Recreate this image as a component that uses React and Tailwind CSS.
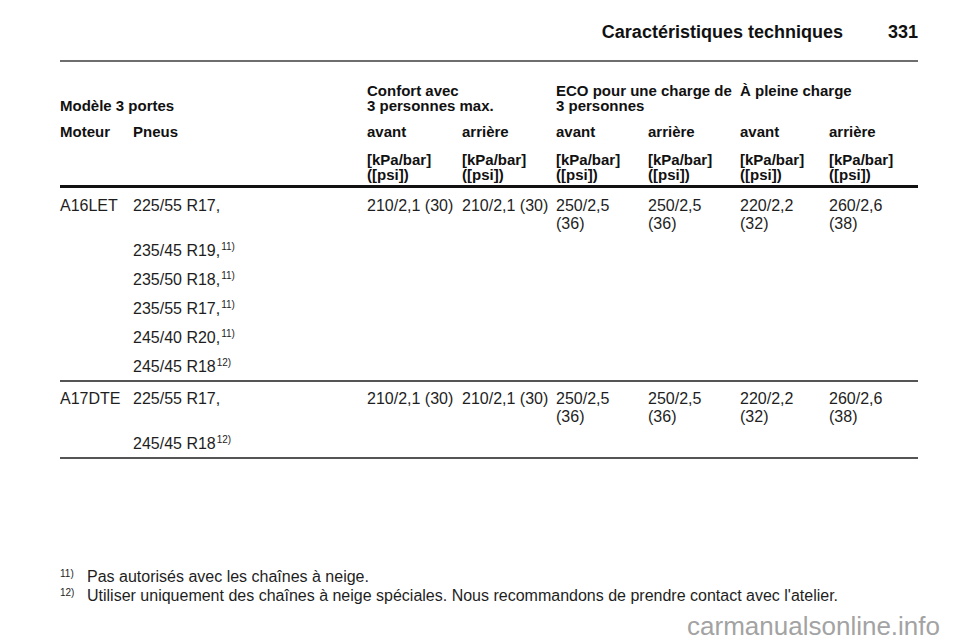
import React from 'react';

const cols = 'grid grid-cols-[73px_234px_95px_94px_92px_92px_89px_89px]';

function Sup({ n }) {
  return <sup className="text-[10px] relative top-[-6px] ml-[1px]">{n}</sup>;
}

function Values() {
  const vals = [
    ['210/2,1 (30)'],
    ['210/2,1 (30)'],
    ['250/2,5', '(36)'],
    ['250/2,5', '(36)'],
    ['220/2,2', '(32)'],
    ['260/2,6', '(38)'],
  ];
  return vals.map((v, i) => (
    <div key={i} className="whitespace-nowrap">
      {v.map((line, j) => (
        <div key={j}>{line}</div>
      ))}
    </div>
  ));
}

function Group({ engine, tires, first }) {
  return (
    <div className="border-b-[2px] border-[#555] pb-[4px]">
      <div className={`${cols} ${first ? 'pt-[9px]' : 'pt-[8px]'}`}>
        <div>{engine}</div>
        <div>225/55 R17,</div>
        <Values />
      </div>
      {tires.map((t, i) => (
        <div key={i} className={`${cols} ${i === 0 ? 'pt-[9px]' : 'pt-[11px]'}`}>
          <div />
          <div className="whitespace-nowrap">
            {t.name}
            <Sup n={t.note} />
          </div>
        </div>
      ))}
    </div>
  );
}

export default function App() {
  const g1 = [
    { name: '235/45 R19,', note: '11)' },
    { name: '235/50 R18,', note: '11)' },
    { name: '235/55 R17,', note: '11)' },
    { name: '245/40 R20,', note: '11)' },
    { name: '245/45 R18', note: '12)' },
  ];
  const g2 = [{ name: '245/45 R18', note: '12)' }];

  return (
    <div className="w-[960px] h-[642px] overflow-hidden bg-white text-[#1e1e1e] font-['Liberation_Sans',Arial,sans-serif]">
      <div className="pl-[60px] pr-[42px]">
        <div className="pt-[21px] flex justify-end items-baseline text-[18px] leading-[22px] font-bold text-[#111]">
          <span>Caractéristiques techniques</span>
          <span className="ml-[45px]">331</span>
        </div>
        <div className="mt-[17px] h-[2px] bg-[#6e6e6e]" />

        <div className="text-[15px] leading-[15px] font-bold text-[#111]">
          <div className={`${cols} pt-[21px]`}>
            <div className="col-span-2 self-end">Modèle 3 portes</div>
            <div className="col-span-2">
              Confort avec
              <br />3 personnes max.
            </div>
            <div className="col-span-2 whitespace-nowrap">
              ECO pour une charge de
              <br />3 personnes
            </div>
            <div className="col-span-2 whitespace-nowrap">À pleine charge</div>
          </div>
          <div className={`${cols} pt-[11px]`}>
            <div>Moteur</div>
            <div>Pneus</div>
            <div>avant</div>
            <div>arrière</div>
            <div>avant</div>
            <div>arrière</div>
            <div>avant</div>
            <div>arrière</div>
          </div>
          <div className={`${cols} pt-[13px] pb-[3px] border-b-[3px] border-[#111]`}>
            <div />
            <div />
            {[0, 1, 2, 3, 4, 5].map((i) => (
              <div key={i}>
                [kPa/bar]
                <br />([psi])
              </div>
            ))}
          </div>
        </div>

        <div className="text-[16px] leading-[18px]">
          <Group engine="A16LET" tires={g1} first />
          <Group engine="A17DTE" tires={g2} />
        </div>

        <div className="mt-[108px] text-[16px] leading-[19px]">
          <div className="flex">
            <span className="w-[27px] text-[10px] leading-[14px] shrink-0">11)</span>
            <span>Pas autorisés avec les chaînes à neige.</span>
          </div>
          <div className="flex">
            <span className="w-[27px] text-[10px] leading-[14px] shrink-0">12)</span>
            <span>Utiliser uniquement des chaînes à neige spéciales. Nous recommandons de prendre contact avec l'atelier.</span>
          </div>
        </div>
      </div>
      <div className="flex justify-end pr-[20px] mt-[6px] text-[26px] leading-[30px] text-[#a3a3a3]">
        carmanualsonline.info
      </div>
    </div>
  );
}
